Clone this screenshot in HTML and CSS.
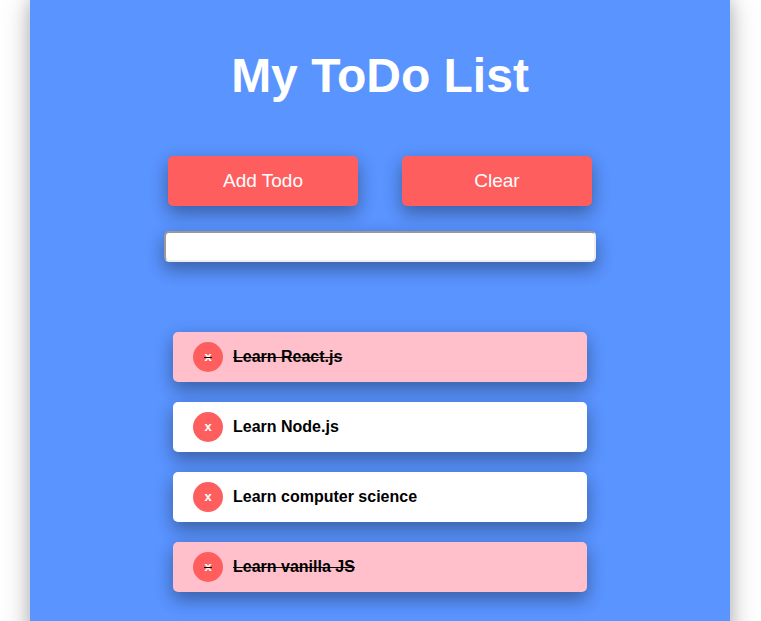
FILE: index.html
```html
<!DOCTYPE html>
<html lang="en">
<head>
<meta charset="utf-8">
<title>My ToDo List</title>
<link rel="stylesheet" href="styles.css">
</head>
<body>
<main class="container">
  <h1 class="title">My ToDo List</h1>
  <form class="controls">
    <div class="buttons">
      <button class="button" type="button">Add Todo</button>
      <button class="button" type="button">Clear</button>
    </div>
    <input class="entry" type="text" aria-label="New todo">
  </form>
  <ul class="list">
    <li class="item done"><button class="remove" type="button"><span class="cross">x</span></button><span class="label">Learn React.js</span></li>
    <li class="item"><button class="remove" type="button"><span class="cross">x</span></button><span class="label">Learn Node.js</span></li>
    <li class="item"><button class="remove" type="button"><span class="cross">x</span></button><span class="label">Learn computer science</span></li>
    <li class="item done"><button class="remove" type="button"><span class="cross">x</span></button><span class="label">Learn vanilla JS</span></li>
  </ul>
</main>
</body>
</html>
```
FILE: styles.css
```css
* {
  box-sizing: border-box;
}

body {
  margin: 0;
  padding-right: 1px;
  background: #fff;
  font-family: "Liberation Sans", Arial, sans-serif;
  overflow-x: hidden;
}

body::-webkit-scrollbar {
  display: none;
}

.container {
  max-width: 700px;
  min-height: 100vh;
  margin: 0 auto;
  padding: 48px 20px 60px;
  background: #5a94ff;
  box-shadow: 0 0 16px 0 rgba(0, 0, 0, 0.2), 0 0 30px 0 rgba(0, 0, 0, 0.2);
}

.title {
  margin: 0 0 52px;
  color: #fff;
  font-size: 48px;
  line-height: 56px;
  text-align: center;
}

.controls {
  display: flex;
  flex-direction: column;
  align-items: center;
  gap: 25px;
}

.buttons {
  display: flex;
  gap: 44px;
}

.button,
.entry,
.item {
  border-radius: 5px;
  box-shadow: 0 8px 16px 0 rgba(0, 0, 0, 0.2), 0 6px 20px 0 rgba(0, 0, 0, 0.19);
}

.button {
  width: 190px;
  height: 50px;
  border: 0;
  padding: 0;
  background: #ff5e5e;
  color: #fff;
  font: 19px "Liberation Sans", Arial, sans-serif;
}

.entry {
  width: 100%;
  max-width: 432px;
  height: 31px;
  border: 2px solid;
  border-color: #999 #eee #eee #999;
  padding: 0 8px;
  background: #fff;
  font: 16px "Liberation Sans", Arial, sans-serif;
}

.list {
  display: flex;
  flex-direction: column;
  gap: 20px;
  max-width: 414px;
  margin: 70px auto 0;
  padding: 0;
  list-style: none;
}

.item {
  display: flex;
  align-items: center;
  gap: 10px;
  height: 50px;
  padding: 0 20px;
  background: #fff;
  color: #000;
  font-size: 16px;
  font-weight: bold;
}

.remove {
  width: 30px;
  height: 30px;
  border: 0;
  border-radius: 50%;
  padding: 0 0 2px;
  background: #ff5e5e;
  color: #fff;
  font: bold 13px "Liberation Sans", Arial, sans-serif;
}

.cross {
  position: relative;
}

.done {
  background: pink;
}

.done .label {
  text-decoration: line-through;
}

/* Strike line across the cross of a completed item */
.done .cross::after {
  content: "";
  position: absolute;
  left: 0;
  right: 0;
  bottom: 6px;
  height: 1px;
  background: #000;
}
```
